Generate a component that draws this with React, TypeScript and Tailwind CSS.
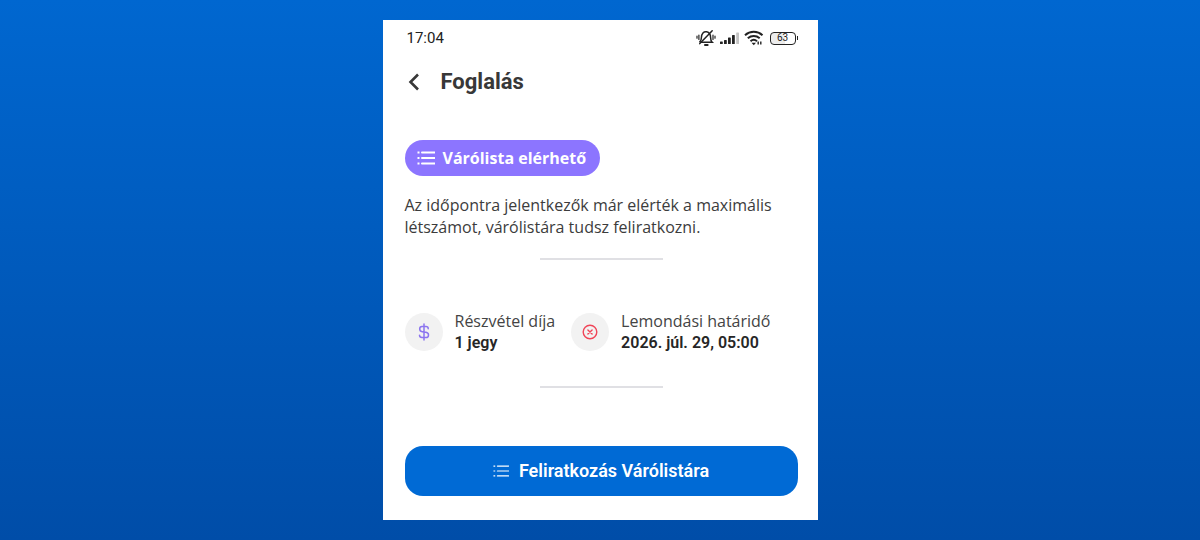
import React from 'react';

const ListIcon: React.FC<{ size: number; stroke: number }> = ({ size, stroke }) => (
  <svg width={size} height={size} viewBox="0 0 18 18" fill="none" stroke="currentColor" strokeWidth={stroke} aria-hidden="true">
    <path d="M5 3.5h12.5M5 9h12.5M5 14.5h12.5" strokeLinecap="round" />
    <path d="M0.5 3.5h2M0.5 9h2M0.5 14.5h2" />
  </svg>
);

const MutedBellIcon = () => (
  <svg width="20" height="18" viewBox="0 0 20 18" fill="none" stroke="currentColor" strokeWidth="1.5" strokeLinecap="round" aria-hidden="true">
    <path d="M5 13.2h11.2c-1.4-1.3-1.6-2.4-1.6-4.6 0-3.1-1.5-5.2-4-5.8-2.9-.5-5.1 1.5-5.2 5.8 0 2-.3 3.1-1.6 4.2" />
    <path d="M9 16h2.6" strokeWidth="2" />
    <path d="M16.2 1.8L3.8 14.6" />
    <path d="M2.9 6v4.5M17 6v4.5M1 7.2v2M19 7.2v2" strokeWidth="1.2" />
  </svg>
);

const SignalIcon = () => (
  <svg width="20" height="14" viewBox="0 0 20 14" fill="currentColor" aria-hidden="true">
    <rect x="0" y="10.5" width="2.8" height="2.5" rx="0.6" />
    <rect x="4" y="9" width="2.8" height="4" rx="0.6" />
    <rect x="8" y="6.5" width="2.8" height="6.5" rx="0.6" />
    <rect x="12" y="4" width="2.8" height="9" rx="0.6" />
    <rect x="16.2" y="1.5" width="2.8" height="11.500" rx="0.6" fill="#c4c4c4" />
  </svg>
);

const WifiIcon = () => (
  <svg width="20" height="16" viewBox="0 0 20 16" fill="none" stroke="currentColor" strokeWidth="2" aria-hidden="true">
    <path d="M1 5.2C6 .7 13.500.7 18.5 5.2" />
    <path d="M3.8 8.3c3.5-3 8.4-3 11.9 0" />
    <path d="M6.5 11.2c1.9-1.6 4.6-1.6 6.500 0" />
    <path d="M7.5 12.8h4.5l-2.2 2.5z" fill="currentColor" stroke="none" />
    <path d="M14.2 11.500v3M16.8 11.500v3" strokeWidth="1.4" />
  </svg>
);

const Divider = () => <hr className="mx-auto h-0.5 w-[123px] border-0 bg-[#e0e0e4]" />;

interface InfoItemProps {
  icon: React.ReactNode;
  label: string;
  value: string;
}

const InfoItem: React.FC<InfoItemProps> = ({ icon, label, value }) => (
  <div className="flex items-center gap-3">
    <div className="flex size-[38px] shrink-0 items-center justify-center rounded-full bg-[#f2f2f2]">{icon}</div>
    <dl className="text-base leading-[22px] whitespace-nowrap">
      <dt className="text-[#444444]">{label}</dt>
      <dd className="font-['Roboto','Liberation_Sans',sans-serif] font-semibold text-[#262626]">{value}</dd>
    </dl>
  </div>
);

const App: React.FC = () => {
  return (
    <div className="flex min-h-screen items-center justify-center bg-linear-to-b from-[#0067d0] to-[#004da8] py-5 font-['Open_Sans','Noto_Sans',sans-serif]">
      <main className="w-full max-w-[435px] bg-white pb-6">
        {/* Status bar */}
        <div className="flex h-9 items-center justify-between pr-5 pl-6 text-[#222222]">
          <time className="font-['Roboto',sans-serif] text-[15px]">17:04</time>
          <div className="flex items-center gap-1">
            <MutedBellIcon />
            <SignalIcon />
            <WifiIcon />
            <div className="flex items-center gap-px pl-0.5">
              <span className="flex h-[13px] w-[26px] items-center justify-center rounded border border-current bg-linear-to-r from-[#ececec] from-60% to-white to-60% font-['Roboto',sans-serif] text-[10px] leading-none">
                63
              </span>
              <span className="h-1 w-px bg-current" />
            </div>
          </div>
        </div>

        {/* Header */}
        <header className="flex h-[52px] items-center gap-[18px] px-[22px] text-[#383838]">
          <button type="button" aria-label="Vissza" className="flex cursor-pointer">
            <svg width="18" height="18" viewBox="0 0 18 18" fill="none" stroke="currentColor" strokeWidth="2.6" aria-hidden="true">
              <path d="M13 1.5L5.5 9l7.5 7.5" />
            </svg>
          </button>
          <h1 className="font-['Roboto','Liberation_Sans',sans-serif] text-[22px] leading-7 font-bold">Foglalás</h1>
        </header>

        <div className="mt-8 pr-5 pl-[22px]">
          <div className="inline-flex h-9 items-center gap-2 rounded-full bg-[#8c75ff] px-3 pr-3.5 align-top font-bold text-white">
            <ListIcon size={18} stroke={2} />
            Várólista elérhető
          </div>

          <p className="mt-[18px] mb-5 text-base leading-[22px] text-[#3c3c3c]">
            Az időpontra jelentkezők már elérték a maximális létszámot, várólistára tudsz feliratkozni.
          </p>

          <Divider />

          <div className="mt-[50px] mb-8 flex gap-4">
            <InfoItem
              label="Részvétel díja"
              value="1 jegy"
              icon={
                <svg width="18" height="18" viewBox="0 0 18 18" fill="none" stroke="#8c75ef" strokeWidth="1.500" strokeLinecap="round" aria-hidden="true">
                  <path d="M9 1v16M13.2 5.8V5.500C13.2 4.200 12.300 3.500 11 3.500H7C5.600 3.500 4.700 4.500 4.700 6c0 1.700.9 2.500 2.500 2.700l3.800.6c1.600.3 2.500 1.100 2.500 2.600s-.9 2.600-2.500 2.600H7c-1.600 0-2.500-.7-2.500-2.200" />
                </svg>
              }
            />
            <InfoItem
              label="Lemondási határidő"
              value="2026. júl. 29, 05:00"
              icon={
                <svg width="16" height="16" viewBox="0 0 16 16" fill="none" stroke="#f04558" strokeWidth="1.4" strokeLinecap="round" aria-hidden="true">
                  <circle cx="8" cy="8" r="6.8" />
                  <path d="M5.9 5.9l4.2 4.2M10.1 5.9l-4.2 4.2" />
                </svg>
              }
            />
          </div>

          <Divider />

          <button
            type="button"
            className="mt-[58px] flex h-[50px] w-full cursor-pointer items-center justify-center gap-2.5 rounded-[18px] bg-[#006ad5] font-['Roboto','Liberation_Sans',sans-serif] text-lg font-semibold text-white"
          >
            <ListIcon size={16} stroke={1.4} />
            Feliratkozás Várólistára
          </button>
        </div>
      </main>
    </div>
  );
};

export default App;
